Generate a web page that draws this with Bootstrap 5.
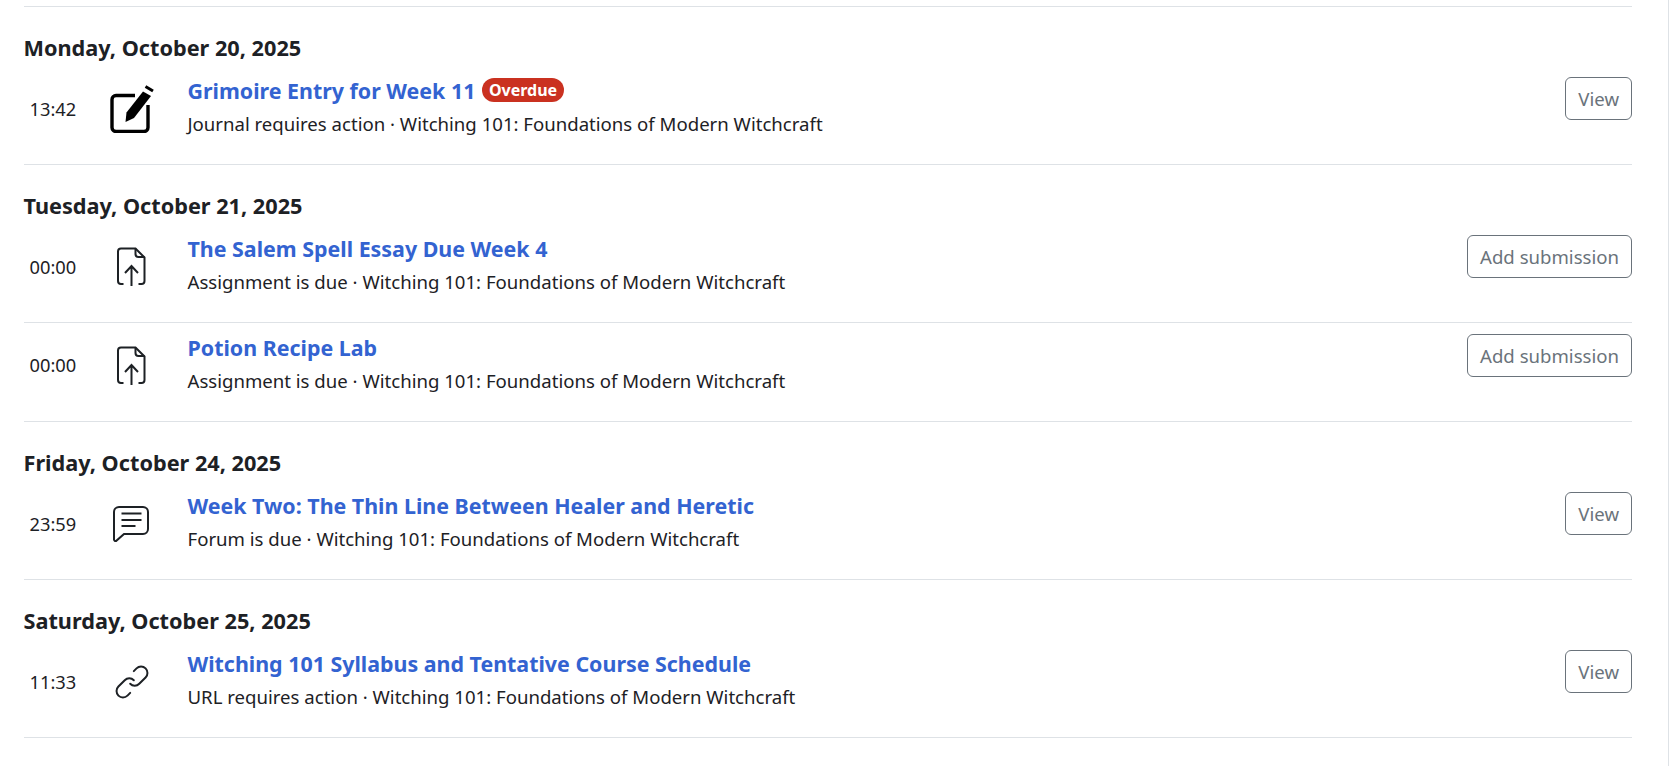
<!DOCTYPE html>
<html lang="en">
<head>
    <meta charset="UTF-8">
    <meta name="viewport" content="width=device-width, initial-scale=1.0">
    <title>Timeline</title>
    <link rel="stylesheet" href="https://cdn.jsdelivr.net/npm/bootstrap@5.3.0/dist/css/bootstrap.min.css">
    <style>
        body {
            font-family: "Noto Sans", "Open Sans", sans-serif;
            color: #1d2125;
            background: #fff;
            overflow: hidden;
        }
        .page-pane {
            width: 1669px;
            height: 766px;
            padding: 6px 36px 0 23.5px;
            border-right: 1px solid #dee2e6;
        }
        .day-group {
            border-top: 1px solid #dee2e6;
            padding-top: 25px;
        }
        .day-group:last-child {
            border-bottom: 1px solid #dee2e6;
        }
        .day-title {
            font-size: 21.7px;
            font-weight: 700;
            line-height: 31px;
            margin: 0 0 2px;
        }
        .event-row {
            padding: 10px 0 26.75px;
        }
        .event-row + .event-row {
            padding: 9px 0 27.75px;
            border-top: 1px solid #dee2e6;
        }
        .event-time {
            width: 60px;
            padding: 5px 0 0 6px;
            font-size: 18.3px;
        }
        .event-icon {
            width: 104px;
            padding: 5px 0 0 24px;
        }
        .event-icon svg {
            display: block;
        }
        .event-title {
            color: #3363d1;
            font-size: 21.4px;
            font-weight: 700;
            line-height: 31px;
            text-decoration: none;
        }
        .event-sub {
            font-size: 18.6px;
            line-height: 27px;
            margin-top: 4px;
        }
        .late-pill {
            background: #ca3120;
            color: #fff;
            font-size: 16px;
            font-weight: 700;
            line-height: 21px;
            padding: 1px 6.5px;
            border-radius: 12px;
            margin-left: 7px;
            vertical-align: 3px;
        }
        .event-btn {
            font-size: 18.6px;
            line-height: 27px;
            margin-top: 2px;
            padding: 7px 12px;
            color: #6a737b;
            border-color: #6a737b;
        }
    </style>
</head>
<body>
    <div class="page-pane">

        <div class="day-group">
            <h5 class="day-title">Monday, October 20, 2025</h5>
            <div class="event-row d-flex align-items-center">
                <div class="event-time">13:42</div>
                <div class="event-icon">
                    <svg width="48" height="48" viewBox="0 0 48 48" fill="none">
                        <path d="M27 10.500H8a4 4 0 0 0-4 4v28a4 4 0 0 0 4 4h28a4 4 0 0 0 4-4V20" stroke="#000" stroke-width="3.400"/>
                        <path d="M35 6.500l8 4.500L26 33l-8.500 4 1-9.500z" fill="#000"/>
                        <path d="M37.500 1.500l7.500 4.500" stroke="#000" stroke-width="3"/>
                    </svg>
                </div>
                <div class="flex-grow-1">
                    <a class="event-title" href="#">Grimoire Entry for Week 11</a><span class="late-pill">Overdue</span>
                    <div class="event-sub">Journal requires action · Witching 101: Foundations of Modern Witchcraft</div>
                </div>
                <button type="button" class="btn event-btn align-self-start">View</button>
            </div>
        </div>

        <div class="day-group">
            <h5 class="day-title">Tuesday, October 21, 2025</h5>
            <div class="event-row d-flex align-items-center">
                <div class="event-time">00:00</div>
                <div class="event-icon">
                    <svg width="48" height="48" viewBox="0 0 48 48" fill="none" stroke="#1d2125" stroke-width="2">
                        <path d="M15.500 42H13a3 3 0 0 1-3-3V9.500a3 3 0 0 1 3-3h14.500l9 9V39a3 3 0 0 1-3 3h-3"/>
                        <path d="M27.500 6.500V12a3 3 0 0 0 3 3h6"/>
                        <path d="M23.500 44V24M17 31l6.500-7 6.500 7"/>
                    </svg>
                </div>
                <div class="flex-grow-1">
                    <a class="event-title" href="#">The Salem Spell Essay Due Week 4</a>
                    <div class="event-sub">Assignment is due · Witching 101: Foundations of Modern Witchcraft</div>
                </div>
                <button type="button" class="btn event-btn align-self-start">Add submission</button>
            </div>
            <div class="event-row d-flex align-items-center">
                <div class="event-time">00:00</div>
                <div class="event-icon">
                    <svg width="48" height="48" viewBox="0 0 48 48" fill="none" stroke="#1d2125" stroke-width="2">
                        <path d="M15.500 42H13a3 3 0 0 1-3-3V9.500a3 3 0 0 1 3-3h14.500l9 9V39a3 3 0 0 1-3 3h-3"/>
                        <path d="M27.500 6.500V12a3 3 0 0 0 3 3h6"/>
                        <path d="M23.500 44V24M17 31l6.500-7 6.500 7"/>
                    </svg>
                </div>
                <div class="flex-grow-1">
                    <a class="event-title" href="#">Potion Recipe Lab</a>
                    <div class="event-sub">Assignment is due · Witching 101: Foundations of Modern Witchcraft</div>
                </div>
                <button type="button" class="btn event-btn align-self-start">Add submission</button>
            </div>
        </div>

        <div class="day-group">
            <h5 class="day-title">Friday, October 24, 2025</h5>
            <div class="event-row d-flex align-items-center">
                <div class="event-time">23:59</div>
                <div class="event-icon">
                    <svg width="48" height="48" viewBox="0 0 48 48" fill="none" stroke="#1d2125" stroke-width="2">
                        <path d="M11 7h24a5 5 0 0 1 5 5v17a5 5 0 0 1-5 5H16l-8 7a1.500 1.500 0 0 1-2-1.500V12a5 5 0 0 1 5-5z"/>
                        <path d="M13.500 13.500h20M13.500 20h20M13.500 26h14"/>
                    </svg>
                </div>
                <div class="flex-grow-1">
                    <a class="event-title" href="#">Week Two: The Thin Line Between Healer and Heretic</a>
                    <div class="event-sub">Forum is due · Witching 101: Foundations of Modern Witchcraft</div>
                </div>
                <button type="button" class="btn event-btn align-self-start">View</button>
            </div>
        </div>

        <div class="day-group">
            <h5 class="day-title">Saturday, October 25, 2025</h5>
            <div class="event-row d-flex align-items-center">
                <div class="event-time">11:33</div>
                <div class="event-icon">
                    <svg width="48" height="48" viewBox="-2.500 -2.500 53 53" fill="none" stroke="#1d2125" stroke-width="2.200" stroke-linecap="round">
                        <path d="M22 26a7 7 0 0 0 10 0l7-7a7 7 0 0 0-10-10l-3 3"/>
                        <path d="M26 22a7 7 0 0 0-10 0l-7 7a7 7 0 0 0 10 10l3-3"/>
                    </svg>
                </div>
                <div class="flex-grow-1">
                    <a class="event-title" href="#">Witching 101 Syllabus and Tentative Course Schedule</a>
                    <div class="event-sub">URL requires action · Witching 101: Foundations of Modern Witchcraft</div>
                </div>
                <button type="button" class="btn event-btn align-self-start">View</button>
            </div>
        </div>

    </div>
    <script src="https://cdn.jsdelivr.net/npm/bootstrap@5.3.0/dist/js/bootstrap.bundle.min.js"></script>
</body>
</html>
